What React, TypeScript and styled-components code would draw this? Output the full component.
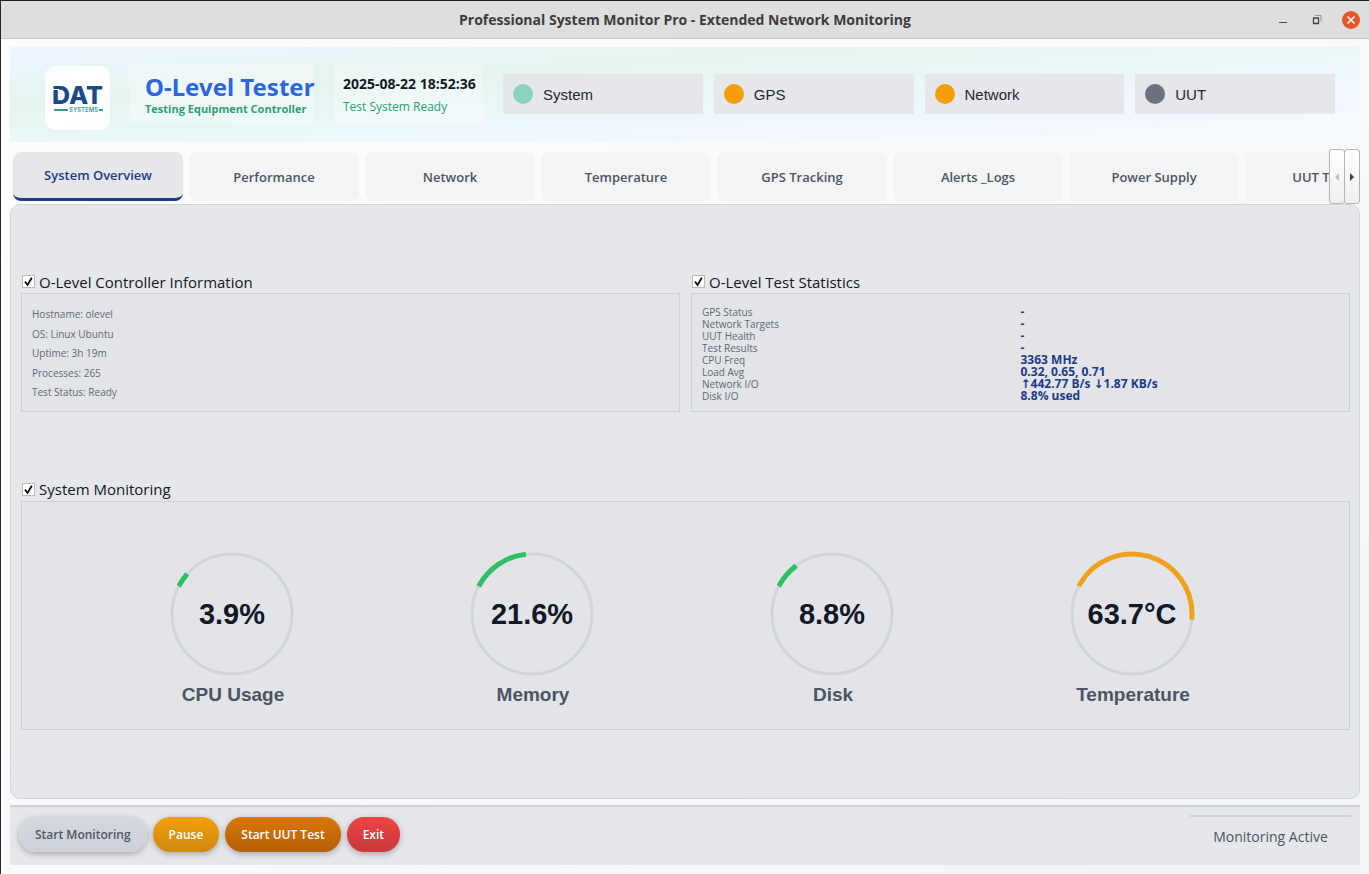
import React, { useState } from "react";
import styled, { createGlobalStyle } from "styled-components";

const GlobalStyle = createGlobalStyle`
  *, *::before, *::after { box-sizing: border-box; }
  body {
    margin: 0;
    font-family: "Open Sans", "DejaVu Sans", sans-serif;
    color: #111827;
  }
  button { font-family: inherit; cursor: pointer; }
`;

const Window = styled.div`
  display: flex;
  flex-direction: column;
  min-height: 100vh;
  border-top: 1px solid #231f20;
  border-left: 1px solid #2b2624;
  background: linear-gradient(to bottom right, #fbfcfe, #f8f9fb 50%, #f3f4f6);
`;

const TitleBar = styled.header`
  display: grid;
  grid-template-columns: 1fr auto 1fr;
  align-items: center;
  height: 38px;
  padding: 0 9px;
  background: #dedede;
  border-bottom: 1px solid #c3c7c6;
`;

const WindowTitle = styled.h1`
  grid-column: 2;
  margin: 0;
  font-size: 14px;
  line-height: 20px;
  font-weight: 700;
  color: #3c3c3c;
`;

const WindowControls = styled.div`
  display: flex;
  justify-content: flex-end;
  align-items: center;
  gap: 16px;
`;

const ControlButton = styled.button`
  display: flex;
  width: 18px;
  height: 18px;
  padding: 0;
  border: 0;
  background: none;
`;

const Content = styled.main`
  flex: 1;
  display: flex;
  flex-direction: column;
  padding: 8px 9px 9px;
`;

const Banner = styled.section`
  display: flex;
  align-items: center;
  height: 95px;
  padding: 0 25px 1px 35px;
  background: linear-gradient(to bottom right, #edf5ff, #e5f4f0 30%, #e9f6f6 48%, #eff8ff 68%, #f8fafc);
`;

const LogoCard = styled.div`
  align-self: flex-end;
  display: flex;
  width: 65px;
  height: 64px;
  margin: 0 19px 11px 0;
  border-radius: 10px;
  background: linear-gradient(to bottom right, #f9fcff, #ffffff 40%, #fbfdfd);
`;

const BannerBlock = styled.div`
  display: flex;
  flex-direction: column;
  justify-content: center;
  height: 58px;
  margin-right: 20px;
  background: rgba(255, 255, 255, 0.3);
  white-space: nowrap;
`;

const TitleBlock = styled(BannerBlock)`
  width: 185px;
  padding: 2px 0 0 16px;
`;

const ClockBlock = styled(BannerBlock)`
  width: 149px;
  padding: 4px 0 0 9px;
`;

const ProductName = styled.h2`
  margin: 0;
  font-family: "Noto Sans", sans-serif;
  font-size: 24px;
  line-height: 28px;
  font-weight: 700;
  color: #2f66dc;
`;

const ProductTagline = styled.p`
  margin: 0;
  font-size: 11px;
  line-height: 16px;
  font-weight: 700;
  color: #2f9e74;
`;

const Clock = styled.time`
  font-size: 14px;
  line-height: 22px;
  font-weight: 700;
  color: #14181f;
`;

const ReadyText = styled.span`
  font-size: 12px;
  line-height: 24px;
  color: #2f9e74;
`;

const StatusList = styled.ul`
  flex: 1;
  display: grid;
  grid-template-columns: repeat(4, 1fr);
  gap: 11px;
  margin: 0;
  padding: 0;
  list-style: none;
`;

const StatusChip = styled.li`
  display: flex;
  align-items: center;
  gap: 10px;
  height: 40px;
  padding: 0 10px;
  background: #e5e7eb;
  font-family: "Liberation Sans", Arial, sans-serif;
  font-size: 15px;
  color: #1f2937;
`;

const StatusDot = styled.span<{ $color: string }>`
  width: 20px;
  height: 20px;
  border-radius: 50%;
  background: ${(p) => p.$color};
`;

const TabBar = styled.nav`
  display: flex;
  align-items: center;
  height: 55px;
  margin-top: 7px;
`;

const TabStrip = styled.div`
  flex: 1 1 0;
  min-width: 0;
  display: flex;
  gap: 6px;
  height: 49px;
  padding-left: 3px;
  overflow: hidden;
`;

const Tab = styled.button<{ $active: boolean }>`
  flex: 0 0 170px;
  padding: 0;
  border: 0;
  border-bottom: ${(p) => (p.$active ? "3px solid #1e3a8a" : "0")};
  border-radius: 8px;
  background: ${(p) => (p.$active ? "#e5e7eb" : "#f3f4f6")};
  font-size: 13px;
  line-height: 18px;
  font-weight: 600;
  color: ${(p) => (p.$active ? "#1e3a8a" : "#4b5563")};
`;

const TabScroller = styled.div`
  display: flex;
  height: 55px;
`;

const ScrollButton = styled.button`
  display: flex;
  align-items: center;
  justify-content: center;
  width: 16px;
  height: 55px;
  padding: 0;
  border: 1px solid #b4b4b4;
  border-radius: 3px;
  background: linear-gradient(#ffffff, #efefef);
  color: #3d3d3d;

  & + & { margin-left: -1px; }
  &:disabled { color: #c0c0c0; }
`;

const Panel = styled.section`
  flex: 1;
  display: flex;
  flex-direction: column;
  justify-content: space-evenly;
  padding: 0 9px 0 10px;
  border: 1px solid #d1d5db;
  border-radius: 10px;
  background: #e5e7eb;
`;

const GroupRow = styled.div`
  display: grid;
  grid-template-columns: 1fr 1fr;
  gap: 11px;
`;

const Group = styled.section`
  display: flex;
  flex-direction: column;
`;

const GroupLabel = styled.label`
  display: flex;
  align-items: center;
  gap: 4px;
  height: 20px;
  padding: 0 0 3px 1px;
  font-size: 15px;
  line-height: 16px;
  color: #14181f;
`;

const CheckBox = styled.input`
  appearance: none;
  width: 13px;
  height: 13px;
  margin: 0;
  border: 1px solid #b9b9b9;
  background: #ffffff;

  &:checked {
    background: #ffffff
      url("data:image/svg+xml,%3Csvg xmlns='http://www.w3.org/2000/svg' viewBox='0 0 11 11'%3E%3Cpath d='M2 5.6L4.6 9L8.8 1.8' fill='none' stroke='%23111' stroke-width='1.8'/%3E%3C/svg%3E")
      center / 11px 11px no-repeat;
  }
`;

const GroupBox = styled.div`
  flex: 1;
  border: 1px solid #cdd0d6;
  background: #e2e4e8;
`;

const InfoBox = styled(GroupBox)`
  padding: 13px 10px 12px;
`;

const InfoList = styled.ul`
  display: flex;
  flex-direction: column;
  justify-content: space-between;
  height: 100%;
  margin: 0;
  padding: 0;
  list-style: none;
  font-size: 10px;
  line-height: 14px;
  color: #5f6875;
`;

const StatsBox = styled(GroupBox)`
  padding: 12px 10px 9px;
`;

const StatsGrid = styled.dl`
  display: grid;
  grid-template-columns: 1fr 1fr;
  grid-auto-rows: 12px;
  margin: 0;
  line-height: 12px;
`;

const StatName = styled.dt`
  font-size: 10px;
  color: #5f6875;
`;

const StatValue = styled.dd`
  margin: 0;
  font-size: 12px;
  font-weight: 700;
  color: #1e3a8a;
`;

const GaugeBox = styled(GroupBox)`
  display: flex;
  justify-content: center;
  padding: 47px 10px 22px 3px;
`;

const GaugeItem = styled.figure`
  flex: 0 1 300px;
  display: flex;
  flex-direction: column;
  align-items: center;
  gap: 4px;
  margin: 0;
  font-family: "Liberation Sans", Arial, sans-serif;
  font-weight: 700;
`;

const Dial = styled.div`
  display: grid;
  place-items: center;

  & > * { grid-area: 1 / 1; }
`;

const DialValue = styled.span`
  font-size: 29px;
  line-height: 32px;
  color: #111827;
`;

const GaugeName = styled.figcaption`
  padding-left: 2px;
  font-size: 19px;
  line-height: 24px;
  color: #4b5563;
`;

const Footer = styled.footer`
  display: flex;
  justify-content: space-between;
  height: 60px;
  margin-top: 6px;
  padding: 8px 9px 0;
  border-top: 2px solid #cfd3d8;
  background: #e5e7eb;
`;

const Actions = styled.div`
  display: flex;
  gap: 6px;
  padding-top: 2px;
`;

const ActionButton = styled.button<{ $from: string; $to: string; $ink: string }>`
  height: 35px;
  padding: 0 16px;
  border: 0;
  border-radius: 17px;
  background: linear-gradient(${(p) => p.$from}, ${(p) => p.$to});
  box-shadow: 0 2px 6px rgba(0, 0, 0, 0.28);
  font-size: 12px;
  line-height: 16px;
  font-weight: 600;
  color: ${(p) => p.$ink};
`;

const StatusMessage = styled.output`
  width: 161px;
  border-top: 2px solid #cfd3d8;
  padding-top: 9px;
  font-size: 14px;
  line-height: 22px;
  text-align: center;
  color: #4b5563;
`;

const STATUSES = [
  { name: "System", color: "#8dd3bc" },
  { name: "GPS", color: "#f59e0b" },
  { name: "Network", color: "#f59e0b" },
  { name: "UUT", color: "#6b7280" },
];

const TABS = [
  "System Overview",
  "Performance",
  "Network",
  "Temperature",
  "GPS Tracking",
  "Alerts _Logs",
  "Power Supply",
  "UUT Testing",
];

const CONTROLLER_INFO = [
  "Hostname: olevel",
  "OS: Linux Ubuntu",
  "Uptime: 3h 19m",
  "Processes: 265",
  "Test Status: Ready",
];

const STATS = [
  ["GPS Status", "-"],
  ["Network Targets", "-"],
  ["UUT Health", "-"],
  ["Test Results", "-"],
  ["CPU Freq", "3363 MHz"],
  ["Load Avg", "0.32, 0.65, 0.71"],
  ["Network I/O", "↑442.77 B/s ↓1.87 KB/s"],
  ["Disk I/O", "8.8% used"],
];

const GAUGES = [
  { name: "CPU Usage", value: 3.9, unit: "%", color: "#2fbf64" },
  { name: "Memory", value: 21.6, unit: "%", color: "#2fbf64" },
  { name: "Disk", value: 8.8, unit: "%", color: "#2fbf64" },
  { name: "Temperature", value: 63.7, unit: "°C", color: "#f0a11c" },
];

const ACTIONS = [
  { label: "Start Monitoring", from: "#d3d7de", to: "#cdd1d8", ink: "#4f5966" },
  { label: "Pause", from: "#f59e0b", to: "#cf870d", ink: "#ffffff" },
  { label: "Start UUT Test", from: "#d97706", to: "#b45f06", ink: "#ffffff" },
  { label: "Exit", from: "#ef4444", to: "#c9383c", ink: "#ffffff" },
];

function Logo() {
  return (
    <svg width="65" height="64" viewBox="0 0 65 64" role="img" aria-label="DAT Systems">
      <text x="7" y="38" fontFamily="Inter, sans-serif" fontWeight="800" fontSize="25" fill="#1d4a86">
        DAT
      </text>
      <path d="M8 23.500h6" stroke="#ffffff" strokeWidth="1" />
      <path d="M9 44h14M54 44h4" stroke="#3b9c94" strokeWidth="2" />
      <text x="24" y="46" fontFamily="Inter, sans-serif" fontWeight="600" fontSize="6" fill="#3b9c94">
        SYSTEMS
      </text>
    </svg>
  );
}

function Gauge({ name, value, unit, color }: (typeof GAUGES)[number]) {
  const r = 60;
  const point = (deg: number) => {
    const rad = (deg * Math.PI) / 180;
    return `${65 + r * Math.cos(rad)} ${65 - r * Math.sin(rad)}`;
  };
  // The scale starts at 150 degrees and sweeps 240 degrees clockwise.
  const start = 150;
  const end = start - value * 2.4;
  return (
    <GaugeItem>
      <Dial>
        <svg width="130" height="130" viewBox="0 0 130 130" fill="none" aria-hidden="true">
          <circle cx="65" cy="65" r={r} stroke="#d1d5db" strokeWidth="3" />
          <path
            d={`M${point(start)}A${r} ${r} 0 0 1 ${point(end)}`}
            stroke={color}
            strokeWidth="5"
            strokeLinecap="square"
          />
        </svg>
        <DialValue>
          {value}
          {unit}
        </DialValue>
      </Dial>
      <GaugeName>{name}</GaugeName>
    </GaugeItem>
  );
}

function GroupToggle({ title }: { title: string }) {
  const [on, setOn] = useState(true);
  return (
    <GroupLabel>
      <CheckBox type="checkbox" checked={on} onChange={(e) => setOn(e.target.checked)} />
      {title}
    </GroupLabel>
  );
}

export default function App() {
  const [tab, setTab] = useState(TABS[0]);
  return (
    <Window>
      <GlobalStyle />
      <TitleBar>
        <WindowTitle>Professional System Monitor Pro - Extended Network Monitoring</WindowTitle>
        <WindowControls>
          <ControlButton aria-label="Minimize">
            <svg width="18" height="18" viewBox="0 0 18 18">
              <path d="M5 11.500h8" stroke="#4a4a4a" />
            </svg>
          </ControlButton>
          <ControlButton aria-label="Restore">
            <svg width="18" height="18" viewBox="0 0 18 18" fill="none" stroke="#444444">
              <path d="M5.500 7h5v5.500h-5z" strokeWidth="1.300" />
              <path d="M7 4.500h6v6" stroke="#8a8a8a" strokeWidth="0.900" />
            </svg>
          </ControlButton>
          <ControlButton aria-label="Close">
            <svg width="18" height="18" viewBox="0 0 18 18">
              <circle cx="9" cy="9" r="9" fill="#e4572a" />
              <path d="M5.500 5.500l7 7M12.500 5.500l-7 7" stroke="#ffffff" strokeWidth="1.500" />
            </svg>
          </ControlButton>
        </WindowControls>
      </TitleBar>

      <Content>
        <Banner>
          <LogoCard>
            <Logo />
          </LogoCard>
          <TitleBlock>
            <ProductName>O-Level Tester</ProductName>
            <ProductTagline>Testing Equipment Controller</ProductTagline>
          </TitleBlock>
          <ClockBlock>
            <Clock>2025-08-22 18:52:36</Clock>
            <ReadyText>Test System Ready</ReadyText>
          </ClockBlock>
          <StatusList>
            {STATUSES.map((s) => (
              <StatusChip key={s.name}>
                <StatusDot $color={s.color} />
                {s.name}
              </StatusChip>
            ))}
          </StatusList>
        </Banner>

        <TabBar>
          <TabStrip role="tablist">
            {TABS.map((name) => (
              <Tab
                key={name}
                role="tab"
                aria-selected={name === tab}
                $active={name === tab}
                onClick={() => setTab(name)}
              >
                {name}
              </Tab>
            ))}
          </TabStrip>
          <TabScroller>
            <ScrollButton aria-label="Scroll tabs left" disabled>
              <svg width="4" height="8" viewBox="0 0 4 8">
                <path d="M4 0v8L0 4z" fill="currentColor" />
              </svg>
            </ScrollButton>
            <ScrollButton aria-label="Scroll tabs right">
              <svg width="4" height="8" viewBox="0 0 4 8">
                <path d="M0 0v8l4-4z" fill="currentColor" />
              </svg>
            </ScrollButton>
          </TabScroller>
        </TabBar>

        <Panel>
          <GroupRow>
            <Group>
              <GroupToggle title="O-Level Controller Information" />
              <InfoBox>
                <InfoList>
                  {CONTROLLER_INFO.map((line) => (
                    <li key={line}>{line}</li>
                  ))}
                </InfoList>
              </InfoBox>
            </Group>
            <Group>
              <GroupToggle title="O-Level Test Statistics" />
              <StatsBox>
                <StatsGrid>
                  {STATS.map(([name, value]) => (
                    <React.Fragment key={name}>
                      <StatName>{name}</StatName>
                      <StatValue>{value}</StatValue>
                    </React.Fragment>
                  ))}
                </StatsGrid>
              </StatsBox>
            </Group>
          </GroupRow>
          <Group>
            <GroupToggle title="System Monitoring" />
            <GaugeBox>
              {GAUGES.map((g) => (
                <Gauge key={g.name} {...g} />
              ))}
            </GaugeBox>
          </Group>
        </Panel>

        <Footer>
          <Actions>
            {ACTIONS.map((a) => (
              <ActionButton key={a.label} $from={a.from} $to={a.to} $ink={a.ink}>
                {a.label}
              </ActionButton>
            ))}
          </Actions>
          <StatusMessage>Monitoring Active</StatusMessage>
        </Footer>
      </Content>
    </Window>
  );
}
